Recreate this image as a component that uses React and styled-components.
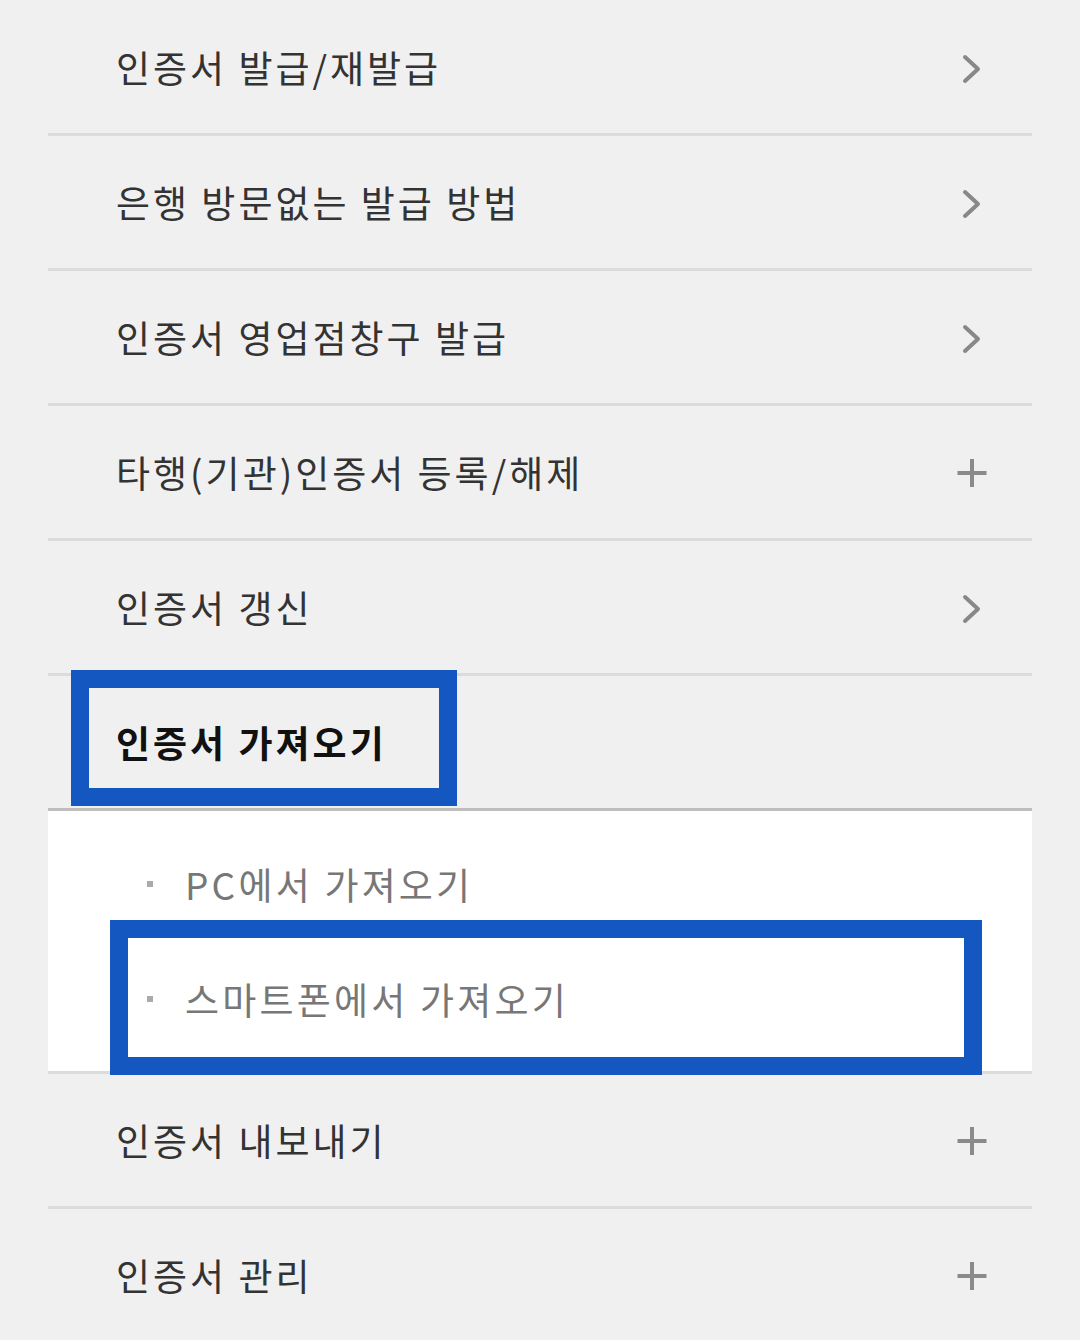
import React from 'react';
import styled, { createGlobalStyle } from 'styled-components';

const GlobalStyle = createGlobalStyle`
	html, body {
		margin: 0;
		padding: 0;
		background: #f0f0f0;
		font-family: "Noto Sans CJK KR", "Noto Sans", sans-serif;
	}
`;

const Menu = styled.ul`
	list-style: none;
	margin: 0 48px;
	padding: 1px 0 0;
`;

const Row = styled.li`
	position: relative;
	display: flex;
	align-items: center;
	justify-content: space-between;
	height: 132px;
	padding: 0 45px 0 68px;
	border-bottom: 3px solid ${({ active }) => (active ? '#bdbdbd' : '#dcdcdc')};
	color: ${({ active }) => (active ? '#111' : '#333')};
	font-size: 37px;
	letter-spacing: 3px;
	font-weight: ${({ active }) => (active ? 700 : 400)};
`;

const Label = styled.span`
	line-height: 1;
`;

const IconBox = styled.span`
	display: flex;
	align-items: center;
	justify-content: center;
	width: 30px;
	height: 30px;
	margin-top: ${({ offset }) => offset || 0}px;
`;

const SubList = styled.ul`
	list-style: none;
	margin: 0;
	padding: 15px 0;
	background: #fff;
	border-bottom: 3px solid #dcdcdc;
`;

const SubItem = styled.li`
	position: relative;
	display: flex;
	align-items: center;
	height: 115px;
	padding-left: 99px;
	color: #777;
	font-size: 37px;
	letter-spacing: 3.2px;

	&::before {
		content: '';
		width: 6px;
		height: 6px;
		margin-right: 32px;
		background: #aaa;
	}
`;

const Highlight = styled.div`
	position: absolute;
	box-sizing: border-box;
	border: 18px solid #1557c1;
	pointer-events: none;
	left: ${({ left }) => left}px;
	top: ${({ top }) => top}px;
	width: ${({ w }) => w}px;
	height: ${({ h }) => h}px;
`;

const Chevron = () => (
	<svg width="20" height="30" viewBox="0 0 20 30">
		<path d="M3 3 L16 15 L3 27" fill="none" stroke="#888" strokeWidth="4" strokeLinecap="round" strokeLinejoin="round" />
	</svg>
);

const Plus = () => (
	<svg width="30" height="30" viewBox="0 0 30 30">
		<path d="M0.5 15 H29.5 M15 1 V29" fill="none" stroke="#8a8a8a" strokeWidth="4" />
	</svg>
);

const items = [
	{ label: '인증서 발급/재발급', icon: 'chevron' },
	{ label: '은행 방문없는 발급 방법', icon: 'chevron' },
	{ label: '인증서 영업점창구 발급', icon: 'chevron' },
	{ label: '타행(기관)인증서 등록/해제', icon: 'plus' },
	{ label: '인증서 갱신', icon: 'chevron' }
];

const after = [
	{ label: '인증서 내보내기', icon: 'plus' },
	{ label: '인증서 관리', icon: 'plus' }
];

const renderIcon = icon =>
	icon === 'plus' ? (
		<IconBox offset={2}>
			<Plus />
		</IconBox>
	) : (
		<IconBox offset={3}>
			<Chevron />
		</IconBox>
	);

export default function App() {
	return (
		<>
			<GlobalStyle />
			<Menu>
				{items.map(item => (
					<Row key={item.label}>
						<Label>{item.label}</Label>
						{renderIcon(item.icon)}
					</Row>
				))}
				<Row active>
					<Label>인증서 가져오기</Label>
					<Highlight left={23} top={-6} w={386} h={136} />
				</Row>
				<SubList>
					<SubItem>PC에서 가져오기</SubItem>
					<SubItem>
						스마트폰에서 가져오기
						<Highlight left={62} top={-21} w={872} h={155} />
					</SubItem>
				</SubList>
				{after.map(item => (
					<Row key={item.label}>
						<Label>{item.label}</Label>
						{renderIcon(item.icon)}
					</Row>
				))}
			</Menu>
		</>
	);
}
